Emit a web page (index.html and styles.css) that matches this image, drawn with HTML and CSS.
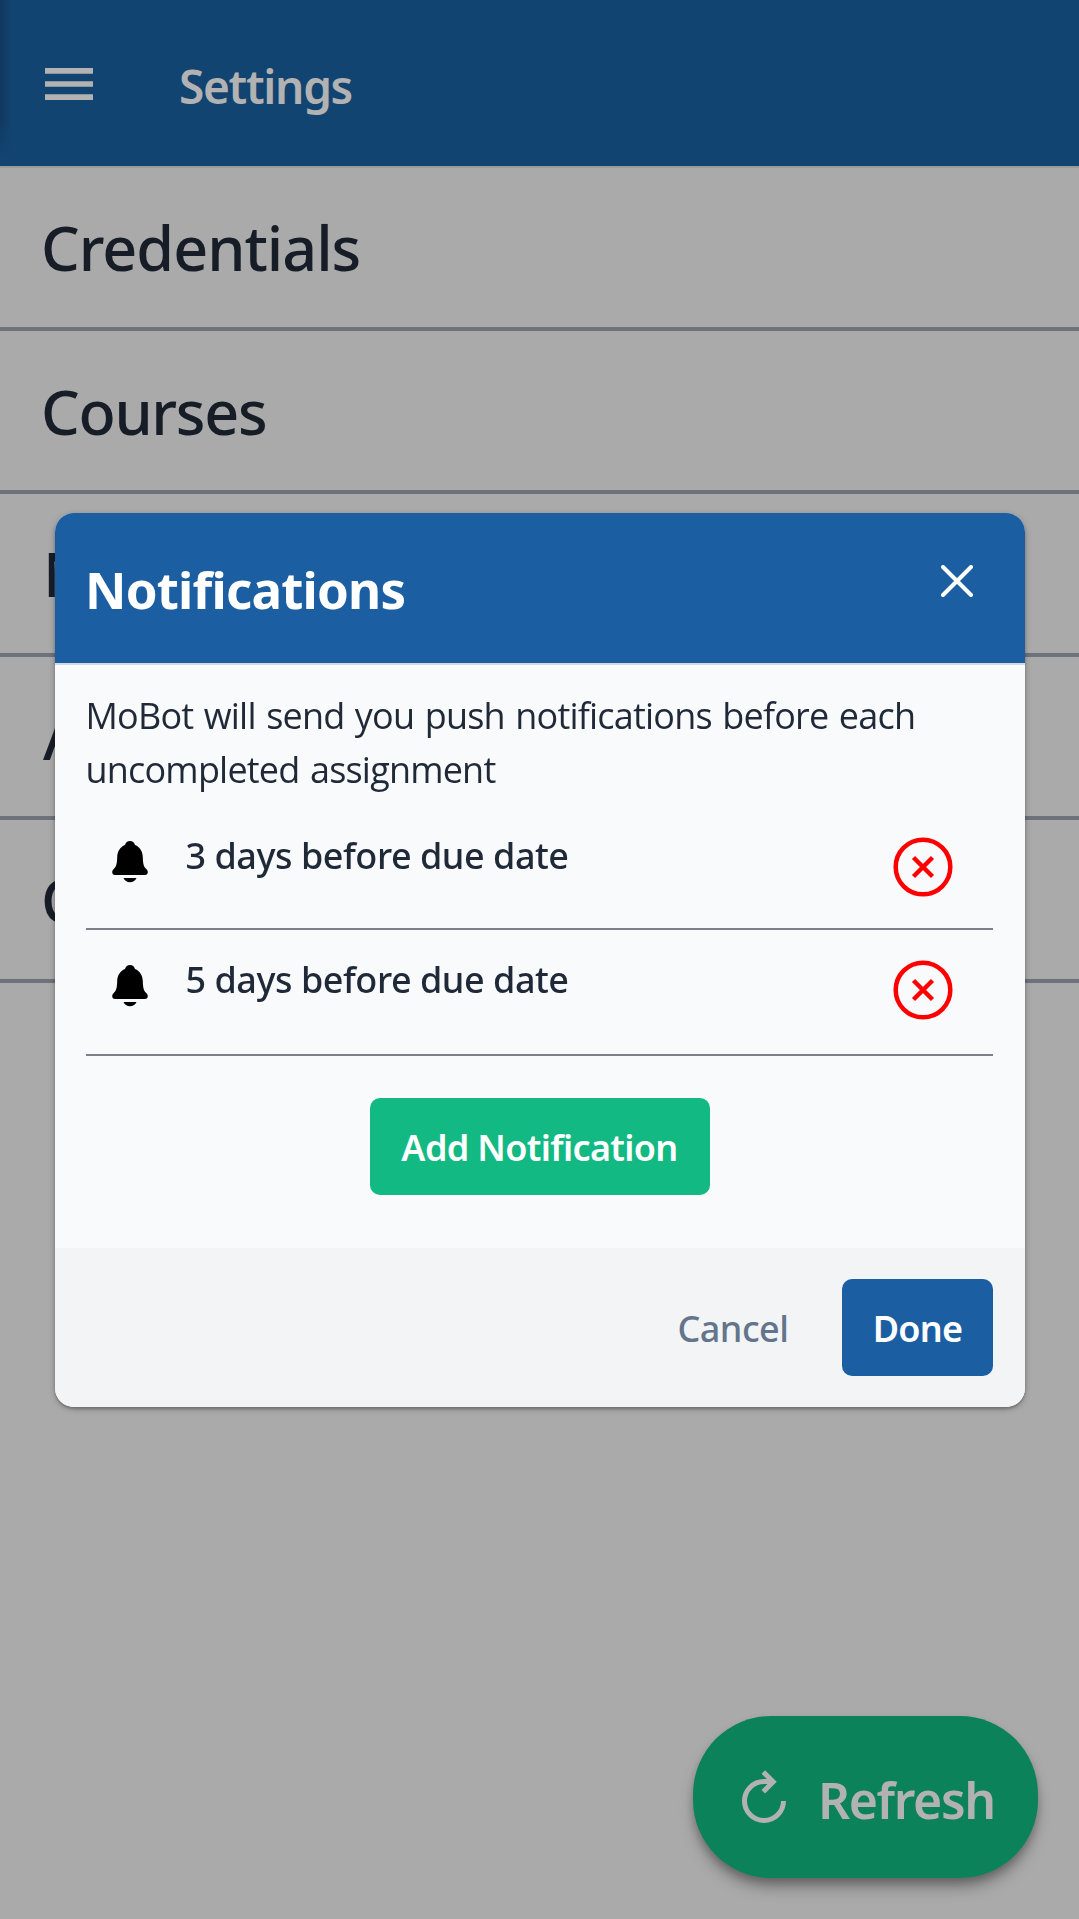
FILE: index.html
```html
<!DOCTYPE html>
<html lang="en">
<head>
<meta charset="utf-8">
<title>Settings</title>
<link rel="stylesheet" href="styles.css">
</head>
<body>
<div class="page">
  <header class="topbar">
    <svg class="menu" width="48" height="32" viewBox="0 0 48 32"><path d="M0 2.9h48M0 16h48M0 29.1h48" stroke="currentColor" stroke-width="5.6"/></svg>
    <h1>Settings</h1>
  </header>
  <nav class="sections">
    <a class="section">Credentials</a>
    <a class="section courses">Courses</a>
    <a class="section covered">N</a>
    <a class="section covered">A</a>
    <a class="section">C</a>
  </nav>
</div>

<button class="refresh">
  <svg width="46" height="56" viewBox="0 0 46 56" fill="none" stroke="currentColor" stroke-width="5"><path d="M42.5 32A19.5 19.5 0 1 1 23 12.5H32M22.3 3L32.2 12.8L22.3 22.8"/></svg>
  <span>Refresh</span>
</button>

<div class="overlay">
  <section class="modal">
    <header class="modal-head">
      <h2>Notifications</h2>
      <svg class="close" width="32" height="32" viewBox="0 0 32 32"><path d="M2 2L30 30M30 2L2 30" stroke="currentColor" stroke-width="4" stroke-linecap="round"/></svg>
    </header>
    <div class="modal-body">
      <p>MoBot will send you push notifications before each<br>uncompleted assignment</p>
      <ul class="reminders">
        <li>
          <svg class="bell" width="36" height="42" viewBox="0 0 36 42"><path d="M18 0C20.6 0 22.2 1.6 23 4C28 6 30.6 10.5 30.8 16C31 22 31.4 25.5 34.3 28C36.8 30.5 36 34 33 34H3C0 34-.8 30.5 1.7 28C4.6 25.5 5 22 5.2 16C5.4 10.5 8 6 13 4C13.8 1.6 15.4 0 18 0ZM11.5 37H24.5C23.5 39.5 21 41.2 18 41.2S12.5 39.5 11.5 37Z"/></svg>
          <span class="label">3 days before due date</span>
          <svg class="remove" width="60" height="60" viewBox="0 0 60 60"><circle cx="30" cy="30" r="27.3"/><path d="M20.5 20.5L39.5 39.5M39.5 20.5L20.5 39.5"/></svg>
        </li>
        <li>
          <svg class="bell" width="36" height="42" viewBox="0 0 36 42"><path d="M18 0C20.6 0 22.2 1.6 23 4C28 6 30.6 10.5 30.8 16C31 22 31.4 25.5 34.3 28C36.8 30.5 36 34 33 34H3C0 34-.8 30.5 1.7 28C4.6 25.5 5 22 5.2 16C5.4 10.5 8 6 13 4C13.8 1.6 15.4 0 18 0ZM11.5 37H24.5C23.5 39.5 21 41.2 18 41.2S12.5 39.5 11.5 37Z"/></svg>
          <span class="label">5 days before due date</span>
          <svg class="remove" width="60" height="60" viewBox="0 0 60 60"><circle cx="30" cy="30" r="27.3"/><path d="M20.5 20.5L39.5 39.5M39.5 20.5L20.5 39.5"/></svg>
        </li>
      </ul>
      <button class="btn add">Add Notification</button>
    </div>
    <footer class="modal-foot">
      <button class="cancel">Cancel</button>
      <button class="btn done">Done</button>
    </footer>
  </section>
</div>
</body>
</html>
```
FILE: styles.css
```css
* { box-sizing: border-box; margin: 0; padding: 0; }

body {
  height: 1919px;
  overflow: hidden;
  background: #aaa;
  color: #171d27;
  font-family: "Noto Sans", "Open Sans", sans-serif;
}

button { border: 0; background: none; font-family: inherit; }
svg { display: block; flex: none; fill: none; }

.topbar {
  display: flex;
  align-items: center;
  gap: 86px;
  height: 168px;
  padding: 4px 45px 0;
  background:
    linear-gradient(to bottom, transparent 120px, #124471 156px) no-repeat 0 0 / 14px 166px,
    linear-gradient(to right, #11385f, #124471 12px) no-repeat 0 0 / 12px 156px,
    #124471;
  border-bottom: 2px solid #9b9b9c;
  color: #b2b2b2;
}
.menu { margin-top: -2px; }
.topbar h1 { padding-top: 1px; font-size: 46px; font-weight: 600; letter-spacing: -1.3px; }

.section {
  display: flex;
  align-items: center;
  height: 163px;
  padding: 0 0 0 41px;
  border-bottom: 4px solid #6e737b;
  font-size: 61px;
  font-weight: 500;
  letter-spacing: -1px;
}
.courses { padding-top: 2px; letter-spacing: -1.3px; }
.covered { padding-left: 43px; }
.sections { padding-top: 0.4px; }

.refresh {
  position: fixed;
  left: 693px;
  top: 1715.5px;
  width: 345px;
  height: 162px;
  display: flex;
  align-items: center;
  padding-left: 47.5px;
  gap: 31.5px;
  border-radius: 78px;
  background: #0c825b;
  color: #b2b2b2;
  font-size: 50px;
  font-weight: 600;
  letter-spacing: -1.4px;
  box-shadow: 0 11px 16px -3px rgba(0, 0, 0, .36), 0 4px 8px rgba(0, 0, 0, .15);
}
.refresh span { padding-top: 6px; }

.overlay {
  position: fixed;
  inset: 0;
  display: flex;
  align-items: center;
  justify-content: center;
}

.modal {
  width: 970px;
  height: 894px;
  display: flex;
  flex-direction: column;
  overflow: hidden;
  border-radius: 19px;
  background: #f9fafc;
  color: #1f2937;
  box-shadow: 0 2px 6px rgba(0, 0, 0, .25), 0 2px 3px rgba(0, 0, 0, .2);
}

.modal-head {
  display: flex;
  align-items: flex-start;
  justify-content: space-between;
  height: 152.5px;
  padding: 41.5px 52px 0 30.5px;
  background: #1b5fa2;
  border-bottom: 2px solid #d5d9e2;
  color: #fff;
}
.modal-head h2 { font-size: 51px; line-height: 70px; font-weight: 700; letter-spacing: -0.8px; }
.close { margin-top: 10.5px; }

.modal-body {
  display: flex;
  flex-direction: column;
  flex: 1;
  padding: 24px 31.5px 0;
}
.modal-body p {
  font: 400 36px/54px "Open Sans", sans-serif;
  letter-spacing: -0.8px;
  word-spacing: 1.9px;
  white-space: nowrap;
  margin-left: -0.5px;
}

.reminders { list-style: none; padding-top: 9px; }
.reminders li {
  display: flex;
  align-items: flex-start;
  height: 124px;
  padding: 23px 40.5px 0 26px;
  border-bottom: 2px solid #7b808a;
}
.reminders li + li { height: 126px; }
.bell { margin-top: 12px; fill: #000; }
.label {
  flex: 1;
  padding-left: 37.5px;
  font-size: 36px;
  line-height: 54px;
  font-weight: 500;
  letter-spacing: -0.47px;
}
.remove { margin-top: 8px; stroke: #f00; stroke-width: 4.5; }
.reminders li + li .remove { margin-top: 7px; }

.btn {
  height: 97px;
  padding-top: 2px;
  border-radius: 10px;
  color: #fff;
  font-size: 36px;
  font-weight: 600;
}
.add {
  align-self: center;
  width: 340px;
  margin-top: 41.5px;
  background: #12b982;
  letter-spacing: -0.66px;
}

.modal-foot {
  display: flex;
  align-items: center;
  justify-content: flex-end;
  gap: 53.5px;
  height: 159px;
  padding-right: 31.5px;
  background: #f3f4f6;
}
.cancel { padding-top: 2px; color: #64748b; font-size: 36px; font-weight: 500; letter-spacing: -0.5px; }
.done { width: 151px; background: #1b5fa2; letter-spacing: -0.8px; }
```
